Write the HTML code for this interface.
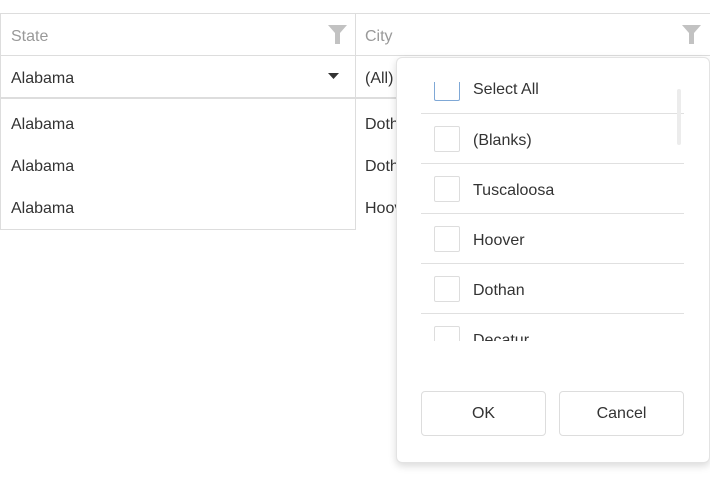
<!DOCTYPE html>
<html><head><style>
body{margin:0;width:710px;height:478px;background:#fff;font-family:"Liberation Sans",sans-serif;position:relative;overflow:hidden;color:#333}
.a{position:absolute}
.t{font-size:16px;color:#333}
.hl{background:#ddd}
.cb{position:absolute;left:434px;width:24px;height:24px;border:1px solid #ddd;border-radius:2px;background:#fff}
.it{position:absolute;left:473px;font-size:16px;color:#333}
.sep{position:absolute;left:421px;width:263px;height:1px;background:#e0e0e0}
.btn{position:absolute;top:391px;height:43px;width:123px;border:1px solid #ddd;border-radius:4px;background:#fff;font-size:16px;color:#333;text-align:center;line-height:44px}
</style></head><body>
<div class="a hl" style="left:0;top:13px;width:710px;height:1px"></div>
<div class="a hl" style="left:0;top:13px;width:1px;height:217px"></div>
<div class="a hl" style="left:355px;top:13px;width:1px;height:217px"></div>
<div class="a hl" style="left:0;top:55px;width:710px;height:1px"></div>
<div class="a hl" style="left:0;top:97px;width:710px;height:2px"></div>
<div class="a hl" style="left:0;top:229px;width:356px;height:1px"></div>
<div class="a" style="left:11px;top:28px;font-size:16px;color:#999">State</div>
<div class="a" style="left:365px;top:28px;font-size:16px;color:#999">City</div>
<svg class="a" style="left:328px;top:25px" width="19" height="19" viewBox="0 0 19 19"><path d="M0 0H19L12 8V19H7V8Z" fill="#c2c2c2"/></svg>
<svg class="a" style="left:682px;top:25px" width="19" height="19" viewBox="0 0 19 19"><path d="M0 0H19L12 8V19H7V8Z" fill="#c2c2c2"/></svg>
<div class="a t" style="left:11px;top:70px">Alabama</div>
<svg class="a" style="left:328px;top:73px" width="11" height="6"><path d="M0 0H11L5.5 6Z" fill="#333"/></svg>
<div class="a t" style="left:365px;top:70px">(All)</div>
<div class="a t" style="left:11px;top:116px">Alabama</div>
<div class="a t" style="left:11px;top:158px">Alabama</div>
<div class="a t" style="left:11px;top:200px">Alabama</div>
<div class="a t" style="left:365px;top:116px">Dothan</div>
<div class="a t" style="left:365px;top:158px">Dothan</div>
<div class="a t" style="left:365px;top:200px">Hoover</div>
<div class="a" style="left:396px;top:57px;width:312px;height:404px;background:#fff;border:1px solid #e3e3e3;border-radius:6px;box-shadow:0 3px 8px rgba(0,0,0,.15)">
</div>
<div class="a" style="left:397px;top:82px;width:310px;height:259px;overflow:hidden">
 <div class="a" style="left:-397px;top:-82px;width:710px;height:478px">
  <div class="cb" style="top:75px;border-color:#7fa8d6"></div><div class="it" style="top:81px">Select All</div>
  <div class="sep" style="top:113px"></div>
  <div class="cb" style="top:126px"></div><div class="it" style="top:132px">(Blanks)</div>
  <div class="sep" style="top:163px"></div>
  <div class="cb" style="top:176px"></div><div class="it" style="top:182px">Tuscaloosa</div>
  <div class="sep" style="top:213px"></div>
  <div class="cb" style="top:226px"></div><div class="it" style="top:232px">Hoover</div>
  <div class="sep" style="top:263px"></div>
  <div class="cb" style="top:276px"></div><div class="it" style="top:282px">Dothan</div>
  <div class="sep" style="top:313px"></div>
  <div class="cb" style="top:326px"></div><div class="it" style="top:332px">Decatur</div>
  <div class="a" style="left:677px;top:89px;width:4px;height:56px;background:#ececec;border-radius:2px"></div>
 </div>
</div>
<div class="btn" style="left:421px">OK</div>
<div class="btn" style="left:559px">Cancel</div>
</body></html>
